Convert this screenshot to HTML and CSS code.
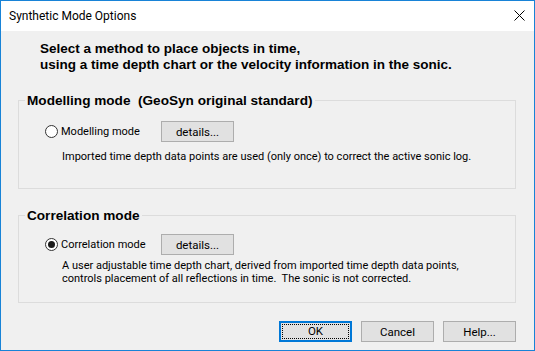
FILE: index.html
```html
<!DOCTYPE html>
<html lang="en">
<head>
    <meta charset="UTF-8" />
    <title>Synthetic Mode Options</title>
    <link rel="stylesheet" href="styles.css">
</head>
<body>
    <div class="window">
        <div class="titlebar">
            <span class="title">Synthetic Mode Options</span>
            <svg class="close" width="11" height="11" viewBox="0 0 11 11">
                <path d="M0.5 0.5 L10.5 10.5 M10.5 0.5 L0.5 10.5" stroke="#000" stroke-width="1" fill="none" />
            </svg>
        </div>

        <div class="content">
            <p class="intro">Select a method to place objects in time,<br>using a time depth chart or the velocity information in the sonic.</p>

            <fieldset class="group group-model">
                <legend>Modelling mode&nbsp; (GeoSyn original standard)</legend>
                <div class="option">
                    <label class="radio"><span class="dot"></span>Modelling mode</label>
                    <button class="btn">details...</button>
                </div>
                <p class="desc">Imported time depth data points are used (only once) to correct the active sonic log.</p>
            </fieldset>

            <fieldset class="group group-corr">
                <legend>Correlation mode</legend>
                <div class="option">
                    <label class="radio checked"><span class="dot"></span>Correlation mode</label>
                    <button class="btn">details...</button>
                </div>
                <p class="desc">A user adjustable time depth chart, derived from imported time depth data points,<br>controls placement of all reflections in time.&nbsp; The sonic is not corrected.</p>
            </fieldset>

            <div class="actions">
                <button class="btn default"><span class="focus">OK</span></button>
                <button class="btn">Cancel</button>
                <button class="btn">Help...</button>
            </div>
        </div>
    </div>
</body>
</html>
```

FILE: styles.css
```css
body {
    margin: 0;
    font-family: Roboto, "Noto Sans", sans-serif;
    font-size: 11px;
    color: #000;
}
.window {
    width: 533px;
    height: 349px;
    border: 1px solid #1883d7;
    background: #f0f0f0;
    display: flex;
    flex-direction: column;
}
.titlebar {
    height: 30px;
    background: #fff;
    display: flex;
    align-items: center;
    justify-content: space-between;
    padding: 0 9px 0 8px;
}
.title {
    font-size: 12px;
    margin-top: -1px;
}
.close {
    margin-top: -1px;
}
.content {
    flex: 1;
    padding: 0 18px 0 17px;
    display: flex;
    flex-direction: column;
}
.intro {
    font-family: "Liberation Sans", Arial, sans-serif;
    font-weight: bold;
    font-size: 13.5px;
    line-height: 16px;
    margin: 10px 0 0 22px;
}
.group {
    margin: 0;
    border: 1px solid #dcdcdc;
    padding: 0;
    min-width: 0;
}
.group legend {
    font-family: "Liberation Sans", Arial, sans-serif;
    font-weight: bold;
    font-size: 13.6px;
    padding: 0 2px;
    margin-left: 6px;
}
.group-model {
    margin-top: 20px;
    height: 94px;
}
.group-corr {
    margin-top: 19px;
    height: 93px;
}
.option {
    display: flex;
    align-items: center;
    padding-left: 26px;
}
.group-model .option {
    margin-top: 13px;
}
.group-corr .option {
    margin-top: 11px;
}
.radio {
    display: flex;
    align-items: center;
    width: 116px;
}
.dot {
    width: 11px;
    height: 11px;
    border: 1px solid #333;
    border-radius: 50%;
    background: #fff;
    margin-right: 3px;
    position: relative;
}
.checked .dot::after {
    content: "";
    position: absolute;
    left: 2px;
    top: 2px;
    width: 7px;
    height: 7px;
    border-radius: 50%;
    background: #1a1a1a;
}
.btn {
    font-family: Roboto, "Noto Sans", sans-serif;
    font-size: 11.5px;
    width: 73px;
    height: 21px;
    padding: 0;
    background: #e1e1e1;
    border: 1px solid #adadad;
    color: #000;
}
.desc {
    margin: 0 0 0 43px;
    line-height: 13px;
}
.group-model .desc {
    margin-top: 8px;
}
.group-corr .desc {
    margin-top: 4px;
}
.actions {
    display: flex;
    justify-content: flex-end;
    gap: 9px;
    margin-top: 18px;
}
.default {
    border: 2px solid #0078d7;
    padding: 1px;
}
.focus {
    display: block;
    height: 100%;
    border: 1px dotted #000;
    box-sizing: border-box;
    line-height: 13px;
}
```
